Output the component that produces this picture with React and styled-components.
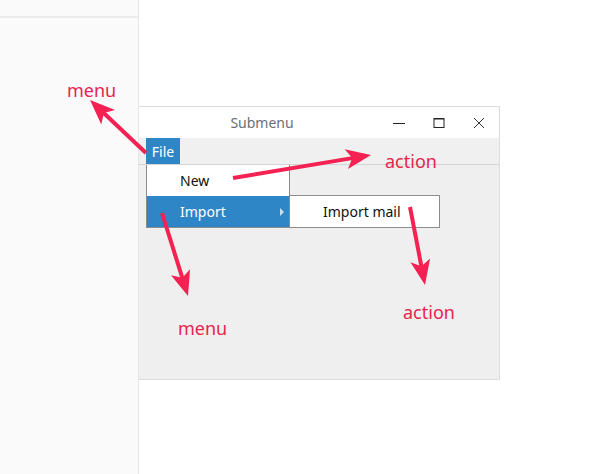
import React from "react";
import styled, { createGlobalStyle } from "styled-components";

const GlobalStyle = createGlobalStyle`
  html, body {
    margin: 0;
    padding: 0;
    background: #ffffff;
  }
  body {
    font-family: "Noto Sans", "Open Sans", sans-serif;
  }
`;

const RED = "#f42152";

// arrows of the annotation layer: tail -> tip
const arrows = [
  { from: [146, 153], to: [90, 100] },
  { from: [233, 178], to: [371, 155] },
  { from: [162, 213], to: [188, 296] },
  { from: [410, 207], to: [425, 285] },
];

const labels = [
  { text: "menu", x: 67, y: 81 },
  { text: "action", x: 385, y: 152 },
  { text: "menu", x: 178, y: 319 },
  { text: "action", x: 403, y: 303 },
];

// swept-back arrow head: tip, one wing, notch, other wing
const headPoints = (from, to, len = 25, half = 10, notch = 19) => {
  const dx = to[0] - from[0];
  const dy = to[1] - from[1];
  const d = Math.hypot(dx, dy);
  const ux = dx / d;
  const uy = dy / d;
  const bx = to[0] - ux * len;
  const by = to[1] - uy * len;
  const nx = to[0] - ux * notch;
  const ny = to[1] - uy * notch;
  return [
    `${to[0]},${to[1]}`,
    `${bx - uy * half},${by + ux * half}`,
    `${nx},${ny}`,
    `${bx + uy * half},${by - ux * half}`,
  ].join(" ");
};

const lineEnd = (from, to, back = 16) => {
  const dx = to[0] - from[0];
  const dy = to[1] - from[1];
  const d = Math.hypot(dx, dy);
  return [to[0] - (dx / d) * back, to[1] - (dy / d) * back];
};

export default function App() {
  return (
    <>
      <GlobalStyle />
      <Page>
        <Sidebar>
          <SidebarHeader />
        </Sidebar>
        <Stage>
          <Window>
            <TitleBar>
              <Title>Submenu</Title>
              <Controls>
                <ControlButton aria-label="minimize">
                  <svg width="12" height="12" viewBox="0 0 12 12">
                    <path d="M0 6.5h12" stroke="#222" strokeWidth="1" />
                  </svg>
                </ControlButton>
                <ControlButton aria-label="maximize">
                  <svg width="12" height="12" viewBox="0 0 12 12">
                    <rect x="1" y="1.5" width="10" height="9" fill="none" stroke="#222" strokeWidth="1" />
                    <path d="M1 2h10" stroke="#222" strokeWidth="1" />
                  </svg>
                </ControlButton>
                <ControlButton aria-label="close">
                  <svg width="12" height="12" viewBox="0 0 12 12">
                    <path d="M1 1l10 10M11 1L1 11" stroke="#333" strokeWidth="1" />
                  </svg>
                </ControlButton>
              </Controls>
            </TitleBar>
            <MenuBar>
              <MenuTitle $active>File</MenuTitle>
              <Dropdown>
                <MenuItem>New</MenuItem>
                <MenuItem $active>
                  Import
                  <SubArrow />
                  <Submenu>
                    <MenuItem>Import mail</MenuItem>
                  </Submenu>
                </MenuItem>
              </Dropdown>
            </MenuBar>
            <Client />
          </Window>
        </Stage>

        <Annotations width="606" height="474" viewBox="0 0 606 474">
          {arrows.map((a, i) => {
            const end = lineEnd(a.from, a.to);
            return (
              <g key={i}>
                <line
                  x1={a.from[0]}
                  y1={a.from[1]}
                  x2={end[0]}
                  y2={end[1]}
                  stroke={RED}
                  strokeWidth="4"
                />
                <polygon points={headPoints(a.from, a.to)} fill={RED} />
              </g>
            );
          })}
        </Annotations>
        {labels.map((l, i) => (
          <Label key={i} style={{ left: l.x, top: l.y }}>
            {l.text}
          </Label>
        ))}
      </Page>
    </>
  );
}

const Page = styled.div`
  position: relative;
  display: flex;
  width: 606px;
  height: 474px;
  overflow: hidden;
  background: #ffffff;
`;

const Sidebar = styled.aside`
  width: 138px;
  flex-shrink: 0;
  background: #fafafa;
  border-right: 1px solid #e6e6e6;
`;

const SidebarHeader = styled.div`
  height: 16px;
  border-bottom: 2px solid #ececec;
`;

const Stage = styled.main`
  flex: 1;
  padding-top: 106px;
`;

const Window = styled.div`
  width: 360px;
  height: 272px;
  display: flex;
  flex-direction: column;
  border: 1px solid #dcdcdc;
  border-left: none;
  background: #efefef;
`;

const TitleBar = styled.div`
  height: 31px;
  display: flex;
  align-items: center;
  background: #ffffff;
`;

const Title = styled.div`
  flex: 1;
  text-align: center;
  font-size: 14px;
  color: #6b6f75;
  padding-left: 6px;
`;

const Controls = styled.div`
  display: flex;
  height: 100%;
`;

const ControlButton = styled.div`
  width: 40px;
  display: flex;
  align-items: center;
  justify-content: center;
`;

const MenuBar = styled.div`
  position: relative;
  height: 26px;
  display: flex;
  padding-left: 7px;
  background: #f0f0f0;
  border-bottom: 1px solid #d4d4d4;
`;

const MenuTitle = styled.div`
  width: 34px;
  display: flex;
  align-items: center;
  justify-content: center;
  font-size: 14px;
  color: ${(p) => (p.$active ? "#ffffff" : "#111111")};
  background: ${(p) => (p.$active ? "#2e86c7" : "transparent")};
`;

const Dropdown = styled.div`
  position: absolute;
  left: 7px;
  top: 27px;
  width: 142px;
  background: #ffffff;
  border: 1px solid #8c8c8c;
  border-top: none;
  display: flex;
  flex-direction: column;
  z-index: 2;
`;

const MenuItem = styled.div`
  position: relative;
  height: 31px;
  display: flex;
  align-items: center;
  padding-left: 33px;
  font-size: 14px;
  color: ${(p) => (p.$active ? "#ffffff" : "#111111")};
  background: ${(p) => (p.$active ? "#2e86c7" : "#ffffff")};
`;

const SubArrow = styled.span`
  position: absolute;
  right: 5px;
  top: 12px;
  width: 0;
  height: 0;
  border-top: 4px solid transparent;
  border-bottom: 4px solid transparent;
  border-left: 4px solid #c9dff0;
`;

const Submenu = styled.div`
  position: absolute;
  left: 142px;
  top: -1px;
  width: 149px;
  border: 1px solid #8c8c8c;
  background: #ffffff;
`;

const Client = styled.div`
  flex: 1;
  background: #efefef;
`;

const Annotations = styled.svg`
  position: absolute;
  left: 0;
  top: 0;
  pointer-events: none;
  z-index: 5;
`;

const Label = styled.div`
  position: absolute;
  font-family: "Noto Sans", "Open Sans", sans-serif;
  font-size: 18px;
  line-height: 18px;
  color: #e8244f;
  z-index: 6;
`;
